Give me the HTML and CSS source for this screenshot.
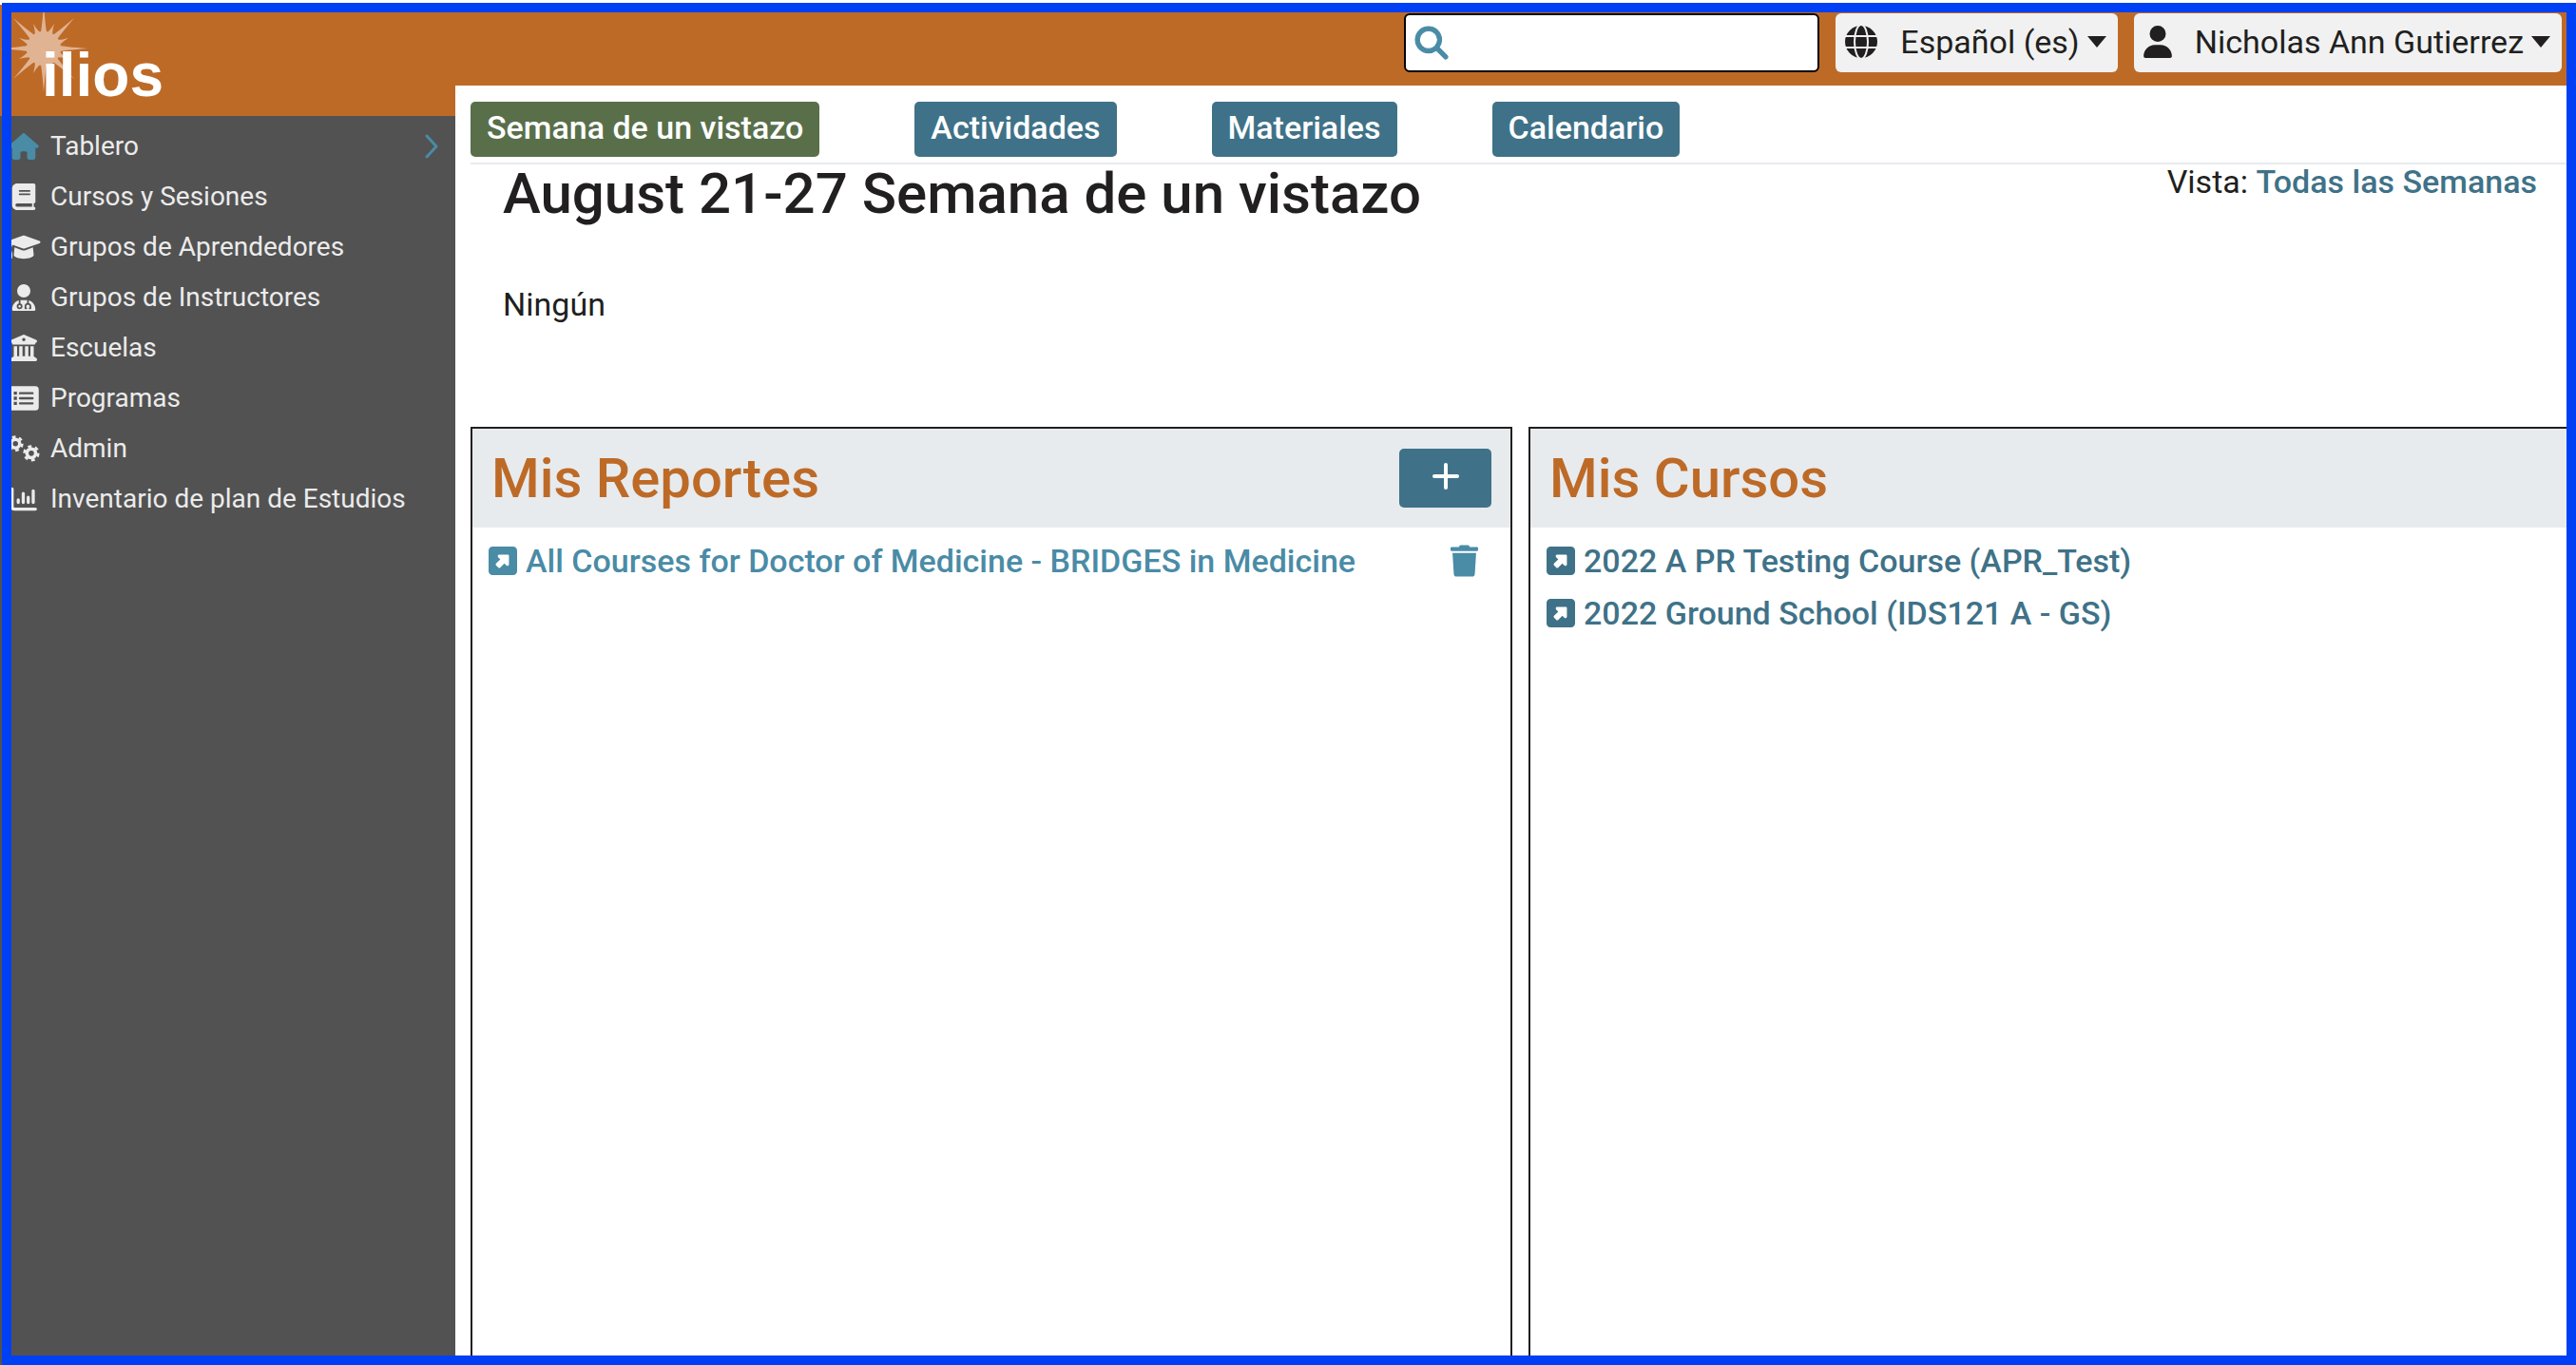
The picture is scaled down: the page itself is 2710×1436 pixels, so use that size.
FILE: index.html
```html
<!DOCTYPE html>
<html lang="es">
<head>
<meta charset="utf-8">
<meta name="viewport" content="width=device-width, initial-scale=1">
<title>Tablero | Ilios</title>
<link rel="stylesheet" href="styles.css">
</head>
<body>
<svg class="defs" aria-hidden="true">
  <symbol id="external" viewBox="0 32 448 448"><path d="M384 32c35.300 0 64 28.700 64 64l0 320c0 35.300-28.700 64-64 64L64 480c-35.300 0-64-28.700-64-64L0 96C0 60.700 28.700 32 64 32l320 0zM320 313.400L320 176c0-8.800-7.200-16-16-16l-137.400 0c-12.500 0-22.600 10.100-22.600 22.600c0 6 2.400 11.800 6.600 16L184 232l-66.300 66.300C114 302 112 306.900 112 312s2 10 5.700 13.700l36.700 36.700c3.600 3.600 8.500 5.700 13.700 5.700s10-2 13.700-5.700L248 296l33.400 33.400c4.200 4.200 10 6.600 16 6.600c12.500 0 22.600-10.100 22.600-22.600z"/></symbol>
  <symbol id="caret" viewBox="0 0 20 12"><path d="M0 0h20L10 12z"/></symbol>
  <symbol id="ray" viewBox="0 0 92 92"><path d="M46 46L92 46Q66 48 62.700 49.300Q64 52 72 57Q63 54.500 60.100 55.400Q62 59 78 78Q59 62 55.400 60.100Q54.500 63 57 72Q52 64 49.300 62.700Q48 66 46 92z"/></symbol>
  <symbol id="gear" viewBox="0 0 320 320"><g fill="none" stroke="currentColor"><circle cx="160" cy="160" r="82" stroke-width="64"/><circle cx="160" cy="160" r="130" stroke-width="48" stroke-dasharray="68 68.136"/></g></symbol>
</svg>

<div class="app">
  <aside class="sidebar">
    <a class="brand" href="#">
      <svg class="sun" viewBox="0 0 92 92" aria-hidden="true">
        <circle cx="46" cy="46" r="18"/>
        <use href="#ray"/>
        <use href="#ray" transform="rotate(90 46 46)"/>
        <use href="#ray" transform="rotate(180 46 46)"/>
        <use href="#ray" transform="rotate(270 46 46)"/>
      </svg>
      <span class="brand-name">ilios</span>
    </a>
    <nav aria-label="Principal">
      <ul class="menu">
        <li><a class="menu-link active" href="#">
          <svg class="menu-icon" viewBox="0 0 576 512"><path d="M575.800 255.500c0 18-15 32.100-32 32.100l-32 0 .7 160.200c0 2.700-.2 5.400-.5 8.100l0 16.200c0 22.100-17.900 40-40 40l-16 0c-1.100 0-2.200 0-3.300-.1c-1.400 .1-2.800 .1-4.200 .1L416 512l-24 0c-22.100 0-40-17.900-40-40l0-24 0-64c0-17.700-14.300-32-32-32l-64 0c-17.700 0-32 14.300-32 32l0 64 0 24c0 22.100-17.900 40-40 40l-24 0-31.900 0c-1.500 0-3-.1-4.500-.2c-1.200 .1-2.400 .2-3.600 .2l-16 0c-22.100 0-40-17.900-40-40l0-112c0-.9 0-1.900 .1-2.800l0-69.700-32 0c-18 0-32-14-32-32.100c0-9 3-17 10-24L266.400 8c7-7 15-8 22-8s15 2 21 7L564.800 231.500c8 7 12 15 11 24z"/></svg>
          <span>Tablero</span>
          <svg class="chevron" viewBox="0 0 14 26"><path d="M2 2l10 11L2 24" fill="none" stroke="currentColor" stroke-width="3" stroke-linecap="round" stroke-linejoin="round"/></svg>
        </a></li>
        <li><a class="menu-link" href="#">
          <svg class="menu-icon" viewBox="0 0 448 512"><path d="M96 0C43 0 0 43 0 96L0 416c0 53 43 96 96 96l288 0 32 0c17.700 0 32-14.300 32-32s-14.300-32-32-32l0-64c17.700 0 32-14.300 32-32l0-320c0-17.700-14.300-32-32-32L384 0 96 0zm0 384l288 0 0 64L96 448c-17.700 0-32-14.300-32-32s14.300-32 32-32zm32-240c0-8.800 7.200-16 16-16l192 0c8.800 0 16 7.200 16 16s-7.200 16-16 16l-192 0c-8.800 0-16-7.200-16-16zm16 48l192 0c8.800 0 16 7.200 16 16s-7.200 16-16 16l-192 0c-8.800 0-16-7.200-16-16s7.200-16 16-16z"/></svg>
          <span>Cursos y Sesiones</span>
        </a></li>
        <li><a class="menu-link" href="#">
          <svg class="menu-icon" viewBox="0 0 640 512"><path d="M320 32c-8.100 0-16.100 1.400-23.700 4.100L15.800 137.400C6.300 140.900 0 149.900 0 160s6.300 19.100 15.800 22.600l57.900 20.900C57.300 229.300 48 259.800 48 291.900l0 28.100c0 28.400-10.800 57.700-22.300 80.800c-6.500 13-13.900 25.800-22.500 37.600C0 442.700-.9 448.300 .9 453.400s6 8.900 11.200 10.200l64 16c4.200 1.100 8.700 .3 12.400-2s6.300-6.100 7.100-10.400c8.600-42.800 4.300-81.200-2.100-108.700C90.300 344.300 86 329.800 80 316.500l0-24.600c0-30.200 10.200-58.700 27.900-81.500l20 7 168.400 60.800c7.600 2.700 15.600 4.100 23.700 4.100s16.100-1.400 23.700-4.100L624.200 182.600c9.500-3.400 15.800-12.500 15.800-22.600s-6.300-19.100-15.800-22.600L343.700 36.100C336.100 33.400 328.100 32 320 32zM128 408c0 35.300 86 72 192 72s192-36.700 192-72L496.700 262.600 354.500 314c-11.100 4-22.800 6-34.500 6s-23.500-2-34.500-6L143.300 262.600 128 408z"/></svg>
          <span>Grupos de Aprendedores</span>
        </a></li>
        <li><a class="menu-link" href="#">
          <svg class="menu-icon" viewBox="0 0 448 512"><path fill-rule="evenodd" d="M224 256a128 128 0 1 0 0-256 128 128 0 1 0 0 256zm-96 55.200C54 332.900 0 401.300 0 482.300C0 498.700 13.300 512 29.700 512l388.600 0c16.400 0 29.700-13.300 29.700-29.700c0-81-54-149.400-128-171.100l0 50.800c27.600 7.100 48 32.200 48 62l0 40c0 8.800-7.200 16-16 16l-16 0c-8.800 0-16-7.200-16-16s7.200-16 16-16l0-24c0-17.700-14.300-32-32-32s-32 14.300-32 32l0 24c8.800 0 16 7.200 16 16s-7.200 16-16 16l-16 0c-8.800 0-16-7.200-16-16l0-40c0-29.800 20.400-54.900 48-62l0-57.100c-6-.6-12.100-.9-18.300-.9l-91.400 0c-6.200 0-12.300 .3-18.300 .9l0 65.400c23.100 6.900 40 28.300 40 53.700c0 30.900-25.100 56-56 56s-56-25.100-56-56c0-25.400 16.900-46.800 40-53.700l0-59.100zM144 448a24 24 0 1 0 0-48 24 24 0 1 0 0 48z"/></svg>
          <span>Grupos de Instructores</span>
        </a></li>
        <li><a class="menu-link" href="#">
          <svg class="menu-icon" viewBox="0 0 512 512"><path fill-rule="evenodd" d="M243.400 2.600l-224 96c-14 6-21.800 21-18.700 35.800S16.800 160 32 160l0 8c0 13.300 10.700 24 24 24l400 0c13.300 0 24-10.700 24-24l0-8c15.200 0 28.300-10.700 31.300-25.600s-4.800-29.900-18.700-35.800l-224-96c-8-3.400-17.200-3.400-25.200 0zM128 224l-64 0 0 196.300c-.6 .3-1.200 .7-1.800 1.100l-48 32c-11.700 7.800-17 22.400-12.900 35.900S17.900 512 32 512l448 0c14.100 0 26.500-9.200 30.600-22.700s-1.100-28.100-12.900-35.900l-48-32c-.6-.4-1.200-.7-1.800-1.100L448 224l-64 0 0 192-40 0 0-192-64 0 0 192-48 0 0-192-64 0 0 192-40 0 0-192zM256 64a32 32 0 1 1 0 64 32 32 0 1 1 0-64z"/></svg>
          <span>Escuelas</span>
        </a></li>
        <li><a class="menu-link" href="#">
          <svg class="menu-icon" viewBox="0 0 576 512"><path fill-rule="evenodd" d="M64 24h448a64 64 0 0 1 64 64v336a64 64 0 0 1-64 64H64a64 64 0 0 1-64-64V88a64 64 0 0 1 64-64zM96 128v60h60v-60zM96 226v60h60v-60zM96 324v60h60v-60zM216 136a22 22 0 0 0 0 44h240a22 22 0 0 0 0-44zM216 234a22 22 0 0 0 0 44h240a22 22 0 0 0 0-44zM216 332a22 22 0 0 0 0 44h240a22 22 0 0 0 0-44z"/></svg>
          <span>Programas</span>
        </a></li>
        <li><a class="menu-link" href="#">
          <svg class="menu-icon" viewBox="0 0 640 512"><use href="#gear" x="0" y="0" width="320" height="320"/><use href="#gear" x="300" y="180" width="330" height="330"/></svg>
          <span>Admin</span>
        </a></li>
        <li><a class="menu-link" href="#">
          <svg class="menu-icon" viewBox="0 0 512 512"><path fill="none" stroke="currentColor" stroke-width="60" stroke-linecap="round" stroke-linejoin="round" d="M32 62v338q0 50 50 50h398M150 270v50M246 150v170M342 220v100M438 100v220"/></svg>
          <span>Inventario de plan de Estudios</span>
        </a></li>
      </ul>
    </nav>
  </aside>

  <div class="page">
    <header class="topbar">
      <form class="search" role="search">
        <svg class="search-icon" viewBox="0 0 512 512" aria-hidden="true"><path d="M416 208c0 45.900-14.900 88.300-40 122.700L502.600 457.400c12.500 12.500 12.500 32.800 0 45.300s-32.800 12.500-45.300 0L330.700 376c-34.400 25.200-76.800 40-122.700 40C93.100 416 0 322.900 0 208S93.100 0 208 0S416 93.100 416 208zM208 352a144 144 0 1 0 0-288 144 144 0 1 0 0 288z" stroke="currentColor" stroke-width="16"/></svg>
        <input class="search-input" type="search" aria-label="Buscar">
      </form>
      <button class="dropdown" type="button" aria-haspopup="true">
        <svg class="dropdown-icon" viewBox="0 0 34 34" aria-hidden="true"><circle cx="17" cy="17" r="17"/><g fill="none" stroke="#f1f1f1" stroke-width="2"><ellipse cx="17" cy="17" rx="7" ry="18"/><path d="M0 11h34M0 23h34"/></g></svg>
        <span>Español (es)</span>
        <svg class="caret" aria-hidden="true"><use href="#caret"/></svg>
      </button>
      <button class="dropdown" type="button" aria-haspopup="true">
        <svg class="dropdown-icon narrow" viewBox="0 0 448 512" aria-hidden="true"><path d="M224 256A128 128 0 1 0 224 0a128 128 0 1 0 0 256zm-45.700 48C79.800 304 0 383.800 0 482.300C0 498.700 13.300 512 29.700 512l388.600 0c16.400 0 29.700-13.300 29.700-29.700C448 383.800 368.200 304 269.700 304l-91.400 0z"/></svg>
        <span>Nicholas Ann Gutierrez</span>
        <svg class="caret" aria-hidden="true"><use href="#caret"/></svg>
      </button>
    </header>

    <main class="dashboard">
      <nav class="tabs" aria-label="Tablero">
        <a class="tab current" href="#">Semana de un vistazo</a>
        <a class="tab" href="#">Actividades</a>
        <a class="tab" href="#">Materiales</a>
        <a class="tab" href="#">Calendario</a>
      </nav>

      <section class="week">
        <div class="week-head">
          <h1>August 21-27 Semana de un vistazo</h1>
          <p class="week-view">Vista: <a href="#">Todas las Semanas</a></p>
        </div>
        <p class="week-empty">Ningún</p>
      </section>

      <div class="panels">
        <section class="panel">
          <div class="panel-head">
            <h2>Mis Reportes</h2>
            <button class="add" type="button" aria-label="Nuevo reporte">
              <svg viewBox="0 0 28 28" aria-hidden="true"><path d="M14 2v24M2 14h24" stroke="currentColor" stroke-width="4" stroke-linecap="round"/></svg>
            </button>
          </div>
          <ul class="items light">
            <li class="item">
              <a href="#"><svg class="item-icon" aria-hidden="true"><use href="#external"/></svg>All Courses for Doctor of Medicine - BRIDGES in Medicine</a>
              <button class="remove" type="button" aria-label="Eliminar">
                <svg viewBox="0 0 448 512" aria-hidden="true"><path d="M432 32H312l-9.400-18.700A24 24 0 0 0 281.100 0H166.800a23.700 23.700 0 0 0-21.400 13.300L136 32H16A16 16 0 0 0 0 48v32a16 16 0 0 0 16 16h416a16 16 0 0 0 16-16V48a16 16 0 0 0-16-16zM53.200 467a48 48 0 0 0 47.900 45h245.800a48 48 0 0 0 47.900-45L416 128H32z"/></svg>
              </button>
            </li>
          </ul>
        </section>
        <section class="panel">
          <div class="panel-head">
            <h2>Mis Cursos</h2>
          </div>
          <ul class="items">
            <li class="item"><a href="#"><svg class="item-icon" aria-hidden="true"><use href="#external"/></svg>2022 A PR Testing Course (APR_Test)</a></li>
            <li class="item"><a href="#"><svg class="item-icon" aria-hidden="true"><use href="#external"/></svg>2022 Ground School (IDS121 A - GS)</a></li>
          </ul>
        </section>
      </div>
    </main>
  </div>
</div>
<div class="frame" aria-hidden="true"></div>
</body>
</html>
```
FILE: styles.css
```css
:root {
  --orange: #be6a27;
  --teal: #3f7288;
  --teal-light: #4a8ba6;
  --green: #596f4a;
  --ink: #211f20;
  --mist: #e7ebee;
}

* {
  box-sizing: border-box;
}

body {
  margin: 0;
  padding-top: 5px;
  background: #fff;
  color: var(--ink);
  font-family: Roboto, "Liberation Sans", sans-serif;
  font-size: 34px;
  line-height: 40px;
}

h1, h2, p, ul {
  margin: 0;
  padding: 0;
  font-weight: 500;
}

ul {
  list-style: none;
}

a {
  color: var(--teal);
  font-weight: 500;
  text-decoration: none;
}

button {
  border: 0;
  font: inherit;
  cursor: pointer;
}

svg {
  fill: currentColor;
  flex: none;
}

.defs {
  display: none;
}

.app {
  display: grid;
  grid-template-columns: 479px 1fr;
  min-height: calc(100vh - 5px);
}

/* Sidebar */
.sidebar {
  background: #525252;
}

.brand {
  position: relative;
  display: block;
  height: 117px;
  padding: 42px 0 0 44px;
  background: var(--orange);
}

.sun {
  position: absolute;
  top: 0;
  left: 0;
  width: 92px;
  height: 92px;
  color: #e0b393;
}

.brand-name {
  position: relative;
  color: #fff;
  font: bold 64px/64px "Liberation Sans", Arial, sans-serif;
}

.menu {
  padding-top: 5px;
}

.menu-link {
  display: flex;
  align-items: center;
  gap: 8px;
  height: 53px;
  padding: 0 18px 0 5px;
  color: #ebebeb;
  font-size: 28px;
  font-weight: 400;
}

.menu-icon {
  width: 40px;
  height: 28px;
}

.active .menu-icon,
.chevron {
  color: var(--teal-light);
}

.chevron {
  width: 14px;
  height: 26px;
  margin-left: auto;
}

/* Top bar */
.topbar {
  display: flex;
  justify-content: flex-end;
  gap: 17px;
  height: 85px;
  padding: 9px 15px 14px;
  background: var(--orange);
}

.search {
  display: flex;
  align-items: center;
  width: 437px;
  padding-left: 10px;
  background: #fff;
  border: 2px solid #000;
  border-radius: 6px;
}

.search-icon {
  width: 34px;
  height: 34px;
  color: var(--teal-light);
  overflow: visible;
}

.search-input {
  flex: 1;
  min-width: 0;
  padding: 0 10px;
  background: none;
  border: 0;
  outline: 0;
  font: inherit;
}

.dropdown {
  display: flex;
  align-items: center;
  padding: 0 12px 2px 10px;
  background: #f1f1f1;
  border-radius: 6px;
  color: var(--ink);
}

.dropdown-icon {
  width: 34px;
  height: 34px;
  margin-right: 24px;
}

.narrow {
  width: 30px;
}

.caret {
  width: 20px;
  height: 12px;
  margin-left: 8px;
}

/* Dashboard */
.page {
  display: flex;
  flex-direction: column;
}

.dashboard {
  display: flex;
  flex: 1;
  flex-direction: column;
  padding-left: 16px;
}

.tabs {
  display: flex;
  gap: 100px;
  padding: 17px 0 6px;
  border-bottom: 2px solid var(--mist);
}

.tab {
  height: 58px;
  padding: 0 17px;
  background: var(--teal);
  border-radius: 5px;
  color: #fff;
  line-height: 54px;
}

.current {
  background: var(--green);
}

.week {
  padding: 0 41px 109px 34px;
}

.week-head {
  display: flex;
  justify-content: space-between;
}

h1 {
  font-size: 60px;
  line-height: 62px;
}

.week-view {
  font-weight: 400;
  line-height: 36px;
}

.week-empty {
  margin-top: 65px;
  font-weight: 400;
}

.panels {
  display: grid;
  flex: 1;
  grid-template-columns: 1fr 1fr;
  gap: 17px;
  padding-right: 6px;
}

.panel {
  border: 2px solid var(--ink);
}

.panel-head {
  display: flex;
  align-items: center;
  justify-content: space-between;
  height: 104px;
  padding: 0 20px;
  background: var(--mist);
}

h2 {
  color: var(--orange);
  font-size: 58px;
  line-height: 60px;
}

.add {
  display: flex;
  align-items: center;
  justify-content: center;
  width: 97px;
  height: 62px;
  padding: 0 0 4px;
  background: var(--teal);
  border-radius: 5px;
  color: #fff;
}

.add svg {
  width: 28px;
  height: 28px;
}

.items {
  padding: 7px 34px 0 17px;
}

.item,
.item a {
  display: flex;
  align-items: center;
}

.item {
  justify-content: space-between;
  height: 55px;
}

.item a {
  gap: 9px;
}

.item-icon {
  width: 30px;
  height: 30px;
}

.light a,
.remove {
  color: var(--teal-light);
}

.remove {
  display: flex;
  padding: 0;
  background: none;
}

.remove svg {
  width: 29px;
  height: 34px;
}

/* Highlight border drawn over the whole window */
.frame {
  position: fixed;
  inset: 3px 0 0 2px;
  border: 10px solid #0040f5;
  pointer-events: none;
}
```
